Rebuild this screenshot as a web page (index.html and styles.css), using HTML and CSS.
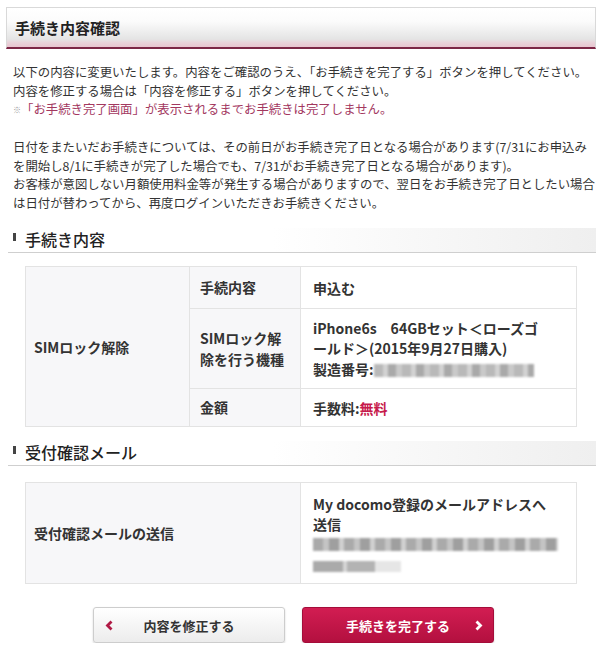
FILE: index.html
```html
<!DOCTYPE html>
<html lang="ja">
<head>
<meta charset="utf-8">
<title>手続き内容確認</title>
<link rel="stylesheet" href="styles.css">
</head>
<body>
<div class="page">
  <h1 class="title">手続き内容確認</h1>

  <div class="intro">
    <p>以下の内容に変更いたします。内容をご確認のうえ、「お手続きを完了する」ボタンを押してください。<br>内容を修正する場合は「内容を修正する」ボタンを押してください。<br><span class="note"><span class="kome">※</span>「お手続き完了画面」が表示されるまでお手続きは完了しません。</span></p>
    <p>日付をまたいだお手続きについては、その前日がお手続き完了日となる場合があります(7/31にお申込み<br>を開始し8/1に手続きが完了した場合でも、7/31がお手続き完了日となる場合があります)。<br>お客様が意図しない月額使用料金等が発生する場合がありますので、翌日をお手続き完了日としたい場合<br>は日付が替わってから、再度ログインいただきお手続きください。</p>
  </div>

  <h2 class="sec"><span class="bar"></span>手続き内容</h2>
  <table class="tbl t1">
    <colgroup><col class="c1"><col class="c2"><col class="c3"></colgroup>
    <tr class="r1">
      <th rowspan="3" class="lab">SIMロック解除</th>
      <th class="sub">手続内容</th>
      <td>申込む</td>
    </tr>
    <tr class="r2">
      <th class="sub">SIMロック解<br>除を行う機種</th>
      <td class="dev">iPhone6s　64GBセット＜ローズゴ<br>ールド＞(2015年9月27日購入)<br>製造番号:<span class="mosaic serial"></span></td>
    </tr>
    <tr class="r3">
      <th class="sub">金額</th>
      <td>手数料:<span class="free">無料</span></td>
    </tr>
  </table>

  <h2 class="sec sec2"><span class="bar"></span>受付確認メール</h2>
  <table class="tbl t2">
    <colgroup><col class="d1"><col class="d2"></colgroup>
    <tr>
      <th class="lab">受付確認メールの送信</th>
      <td class="mail">My docomo登録のメールアドレスへ<br>送信
        <div class="mosaic m1"></div>
        <div class="mosaic m2"></div>
      </td>
    </tr>
  </table>

  <div class="actions">
    <button class="btn back" type="button">
      <svg class="chev" width="9" height="11" viewBox="0 0 9 11"><polyline points="6.5,1.5 2.5,5.5 6.5,9.5" fill="none" stroke="#b01a45" stroke-width="2.8"/></svg>
      <span class="lbl">内容を修正する</span>
      <span></span>
    </button>
    <button class="btn done" type="button">
      <span></span>
      <span class="lbl">手続きを完了する</span>
      <svg class="chev" width="9" height="11" viewBox="0 0 9 11"><polyline points="2.5,1.5 6.5,5.5 2.5,9.5" fill="none" stroke="#ffffff" stroke-width="2.8"/></svg>
    </button>
  </div>
</div>
</body>
</html>
```

FILE: styles.css
```css
* { box-sizing: border-box; }
html, body { margin: 0; padding: 0; background: #fff; }
body {
  font-family: "Noto Sans CJK JP", "Noto Sans", sans-serif;
  color: #333;
  width: 600px;
}
.page { padding: 7px 4px 0 6px; }

.title {
  margin: 0;
  height: 42px;
  border: 1px solid #d9d9d9;
  border-bottom: 2px solid #7c2545;
  background: linear-gradient(#ffffff 0%, #fbfbfb 35%, #e4e4e4 80%, #e9d3da 88%, #e8c4cf 100%);
  font-size: 15px;
  font-weight: 700;
  line-height: 40px;
  padding-left: 8px;
  color: #222;
}

.intro {
  margin: 14px 0 0 7px;
  font-size: 12.4px;
  line-height: 18.5px;
  white-space: nowrap;
  color: #333;
}
.intro p { margin: 0; }
.intro p + p { margin-top: 18.5px; }
.note { color: #a3385f; }
.kome { font-size: 8px; color: #999; vertical-align: 1px; }

.sec {
  margin: 16px 0 0 2px;
  height: 25px;
  border-bottom: 1px solid #cfcfcf;
  background: linear-gradient(to right, #ffffff 45%, #efefef 100%);
  font-size: 16px;
  font-weight: 500;
  line-height: 22px;
  color: #222;
  display: flex;
  align-items: flex-start;
  padding-left: 5px;
}
.sec .bar {
  width: 3px;
  height: 8px;
  background: #444;
  margin: 5px 9px 0 0;
}
.sec2 { margin-top: 14px; }

.tbl {
  border-collapse: collapse;
  margin: 13px 0 0 19px;
  width: 551px;
  table-layout: fixed;
  font-size: 14px;
  font-weight: 700;
  color: #333;
}
.tbl th, .tbl td {
  border: 1px solid #e3e3e3;
  text-align: left;
  vertical-align: middle;
  padding: 0 10px;
}
.tbl th { background: #f7f7f9; }
.tbl td { background: #fff; padding-left: 12px; }
.c1 { width: 164px; }
.c2 { width: 111px; }
.c3 { width: 276px; }
.tbl th.lab { padding-left: 8px; }
.t1 .r1 { height: 42px; }
.t1 .r2 { height: 80px; }
.t1 .r3 { height: 38px; }
.sub { line-height: 21px; }
.dev { line-height: 20.5px; white-space: nowrap; }
.free { color: #c61a4c; }

.mosaic {
  display: inline-block;
  filter: blur(1.2px);
}
.serial {
  width: 160px;
  height: 13px;
  vertical-align: -2px;
  background: repeating-linear-gradient(90deg, #b9b9b9 0 9px, #d2d2d2 9px 14px, #a9a9a9 14px 22px, #c9c9c9 22px 28px);
}

.t2 { margin-top: 16px; }
.d1 { width: 275px; }
.d2 { width: 276px; }
.t2 tr { height: 101px; }
.mail { line-height: 20px; padding-top: 3px; white-space: nowrap; }
.mail .mosaic { display: block; }
.m1 {
  width: 245px;
  height: 13px;
  margin-top: 4px;
  background: repeating-linear-gradient(90deg, #aaaaaa 0 10px, #c4c4c4 10px 16px, #9f9f9f 16px 26px, #d0d0d0 26px 31px);
}
.m2 {
  width: 88px;
  height: 11px;
  margin-top: 10px;
  background: linear-gradient(90deg, #aaaaaa 0 30px, #d6d6d6 30px 34px, #b3b3b3 34px 62px, #e6e6e6 62px 88px);
}

.actions {
  display: flex;
  gap: 17px;
  margin: 23px 0 0 87px;
}
.btn {
  width: 192px;
  height: 36px;
  border-radius: 3px;
  display: grid;
  grid-template-columns: 14px 1fr 14px;
  align-items: center;
  padding: 0 8px;
  font-family: "Noto Sans CJK JP", "Noto Sans", sans-serif;
  font-size: 13px;
  font-weight: 700;
  cursor: pointer;
  box-shadow: 0 1px 2px rgba(0,0,0,0.18);
}
.btn .lbl { text-align: center; }
.btn .chev { justify-self: center; }
.back {
  border: 1px solid #cdcdcd;
  background: linear-gradient(#ffffff, #ececec);
  color: #333;
}
.done {
  border: 1px solid #a40d3a;
  background: linear-gradient(#d21d52, #b3103f);
  color: #fff;
}
```
